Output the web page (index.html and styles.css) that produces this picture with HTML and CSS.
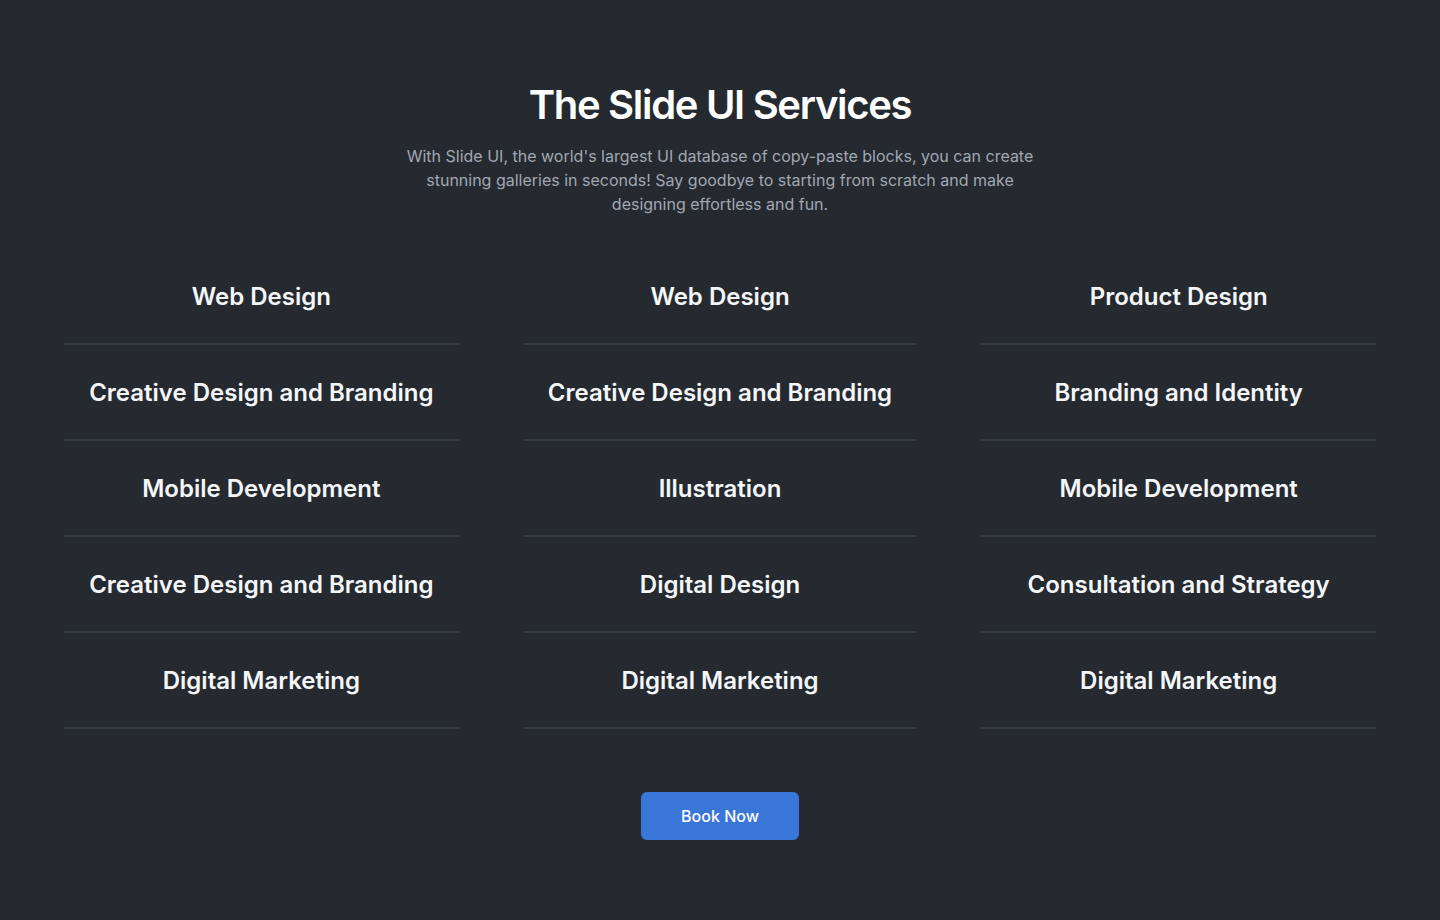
FILE: index.html
```html
<!DOCTYPE html>
<html lang="en">
<head>
<meta charset="utf-8">
<title>The Slide UI Services</title>
<link rel="stylesheet" href="styles.css">
</head>
<body>
<section class="services">
  <header class="head">
    <h1 class="title">The Slide UI Services</h1>
    <p class="lead">With Slide UI, the world's largest UI database of copy-paste blocks, you can create stunning galleries in seconds! Say goodbye to starting from scratch and make designing effortless and fun.</p>
  </header>
  <div class="grid">
    <ul class="col">
      <li class="item">Web Design</li>
      <li class="item">Creative Design and Branding</li>
      <li class="item">Mobile Development</li>
      <li class="item">Creative Design and Branding</li>
      <li class="item">Digital Marketing</li>
    </ul>
    <ul class="col">
      <li class="item">Web Design</li>
      <li class="item">Creative Design and Branding</li>
      <li class="item">Illustration</li>
      <li class="item">Digital Design</li>
      <li class="item">Digital Marketing</li>
    </ul>
    <ul class="col">
      <li class="item">Product Design</li>
      <li class="item">Branding and Identity</li>
      <li class="item">Mobile Development</li>
      <li class="item">Consultation and Strategy</li>
      <li class="item">Digital Marketing</li>
    </ul>
  </div>
  <div class="actions">
    <a class="btn" href="#">Book Now</a>
  </div>
</section>
</body>
</html>
```
FILE: styles.css
```css
* { box-sizing: border-box; }
html, body { margin: 0; padding: 0; }
body {
  background: #252a31;
  font-family: Inter, "Noto Sans", sans-serif;
  color: #fff;
  min-height: 920px;
}
.services {
  padding: 80px 64px 80px;
}
.head {
  display: flex;
  flex-direction: column;
  align-items: center;
  text-align: center;
}
.title {
  margin: 1px 0 0;
  font-size: 40px;
  line-height: 48px;
  font-weight: 600;
  letter-spacing: -1.3px;
  color: #fff;
}
.lead {
  margin: 15px 0 0;
  max-width: 640px;
  font-size: 16px;
  line-height: 24px;
  color: #a1a7b0;
}
.grid {
  margin-top: 33px;
  display: grid;
  grid-template-columns: repeat(3, 1fr);
  column-gap: 64px;
}
.col {
  list-style: none;
  margin: 0;
  padding: 0;
}
.item {
  height: 96px;
  display: flex;
  align-items: center;
  justify-content: center;
  font-size: 24px;
  font-weight: 600;
  color: #f5f6f8;
  border-bottom: 2px solid #353b44;
}
.actions {
  margin-top: 63px;
  display: flex;
  justify-content: center;
}
.btn {
  display: inline-flex;
  align-items: center;
  justify-content: center;
  width: 158px;
  height: 48px;
  border-radius: 6px;
  background: #3a76d8;
  color: #fff;
  font-size: 16px;
  font-weight: 500;
  text-decoration: none;
}
```
